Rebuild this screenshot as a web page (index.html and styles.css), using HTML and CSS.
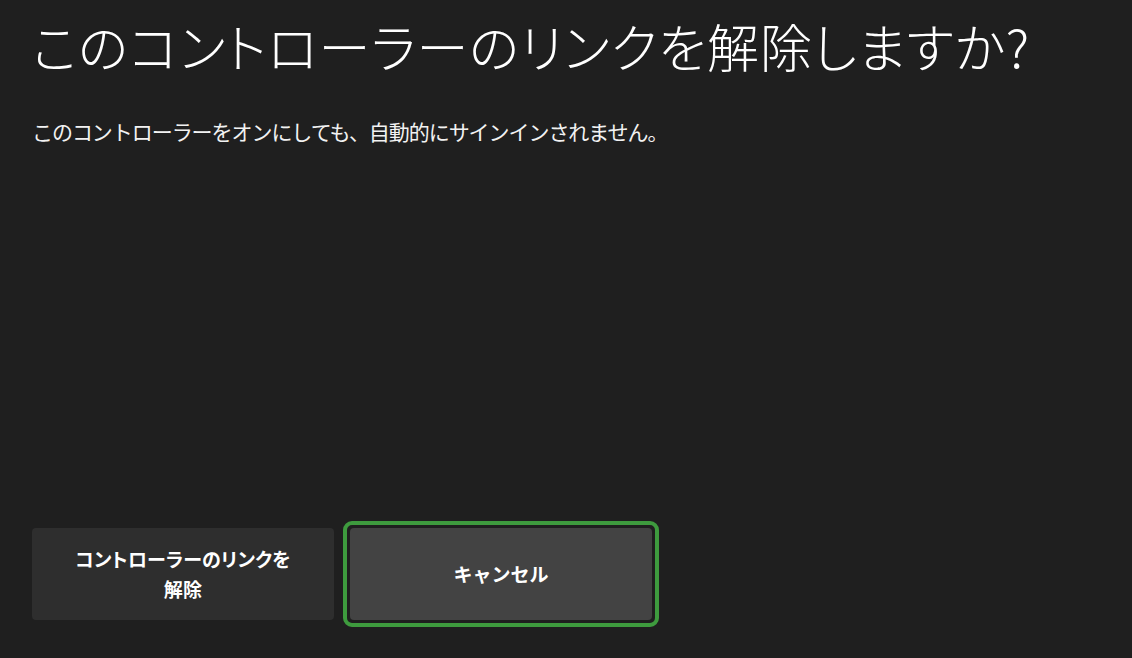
FILE: index.html
```html
<!DOCTYPE html>
<html lang="ja">
<head>
  <meta charset="UTF-8" />
  <meta name="viewport" content="width=device-width, initial-scale=1.0"/>
  <title>コントローラーのリンクを解除</title>
  <link rel="stylesheet" href="styles.css">
</head>
<body>
  <div class="dialog">
    <h1 class="title">このコントローラーのリンクを解除しますか?</h1>
    <p class="message">このコントローラーをオンにしても、自動的にサインインされません。</p>

    <div class="actions">
      <button class="btn btn-unlink">コントローラーのリンクを<br>解除</button>
      <div class="focus-ring">
        <button class="btn btn-cancel">キャンセル</button>
      </div>
    </div>
  </div>
</body>
</html>
```

FILE: styles.css
```css
html, body {
  height: 100%;
}

body {
  margin: 0;
  background-color: #1f1f1f;
  color: #ffffff;
  font-family: "Noto Sans CJK JP", "Noto Sans", sans-serif;
}

.dialog {
  height: 100%;
  box-sizing: border-box;
  padding: 8px 32px 0 32px;
  display: flex;
  flex-direction: column;
}

.title {
  margin: 0;
  font-size: 52px;
  font-weight: 300;
  line-height: 76px;
  letter-spacing: 0.9px;
  font-feature-settings: "palt";
}

.message {
  margin: 33px 0 0 0;
  font-size: 21px;
  font-weight: 400;
  line-height: 28px;
  letter-spacing: -1.05px;
  color: #f2f2f2;
}

.actions {
  margin-top: auto;
  margin-bottom: 31px;
  display: flex;
  align-items: center;
  gap: 9px;
}

.btn {
  width: 302px;
  height: 92px;
  border: none;
  border-radius: 4px;
  background-color: #2e2e2e;
  color: #ffffff;
  font-family: inherit;
  font-size: 19px;
  font-weight: 700;
  line-height: 30px;
  text-align: center;
  padding: 0 10px;
}

.btn-unlink {
  font-feature-settings: "palt";
  letter-spacing: 0.2px;
}

.focus-ring {
  padding: 3px;
  border: 4px solid #3e9b3e;
  border-radius: 9px;
  display: flex;
}

.btn-cancel {
  background-color: #434343;
}
```
